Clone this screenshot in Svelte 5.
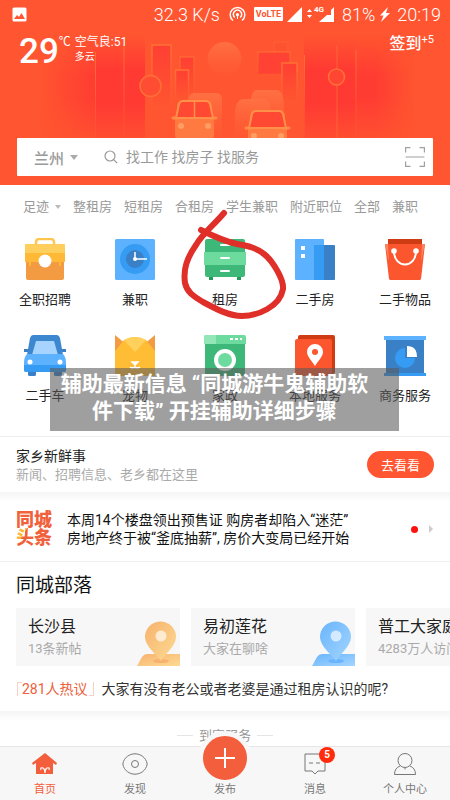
<script>
	const tags = ['整租房', '短租房', '合租房', '学生兼职', '附近职位', '全部', '兼职'];

	const services = [
		{ icon: 'case', name: '全职招聘' },
		{ icon: 'clock', name: '兼职' },
		{ icon: 'drawer', name: '租房' },
		{ icon: 'building', name: '二手房' },
		{ icon: 'bag', name: '二手物品' },
		{ icon: 'car', name: '二手车' },
		{ icon: 'cat', name: '宠物' },
		{ icon: 'washer', name: '家政' },
		{ icon: 'local', name: '本地服务' },
		{ icon: 'chart', name: '商务服务' }
	];

	const tribes = [
		{ name: '长沙县', info: '13条新帖', from: '#f7b26d', to: '#fddb93' },
		{ name: '易初莲花', info: '大家在聊啥', from: '#68b5fd', to: '#a5d5ff' },
		{ name: '普工大家庭', info: '4283万人访问', from: '#f7b26d', to: '#fddb93' }
	];

	let keyword = $state('');
	let current = $state('home');
</script>

<div class="page">
	<header>
		<svg class="skyline" viewBox="0 0 450 185" preserveAspectRatio="xMidYMin slice" aria-hidden="true">
			<defs>
				<linearGradient id="tower" x1="0" y1="0" x2="0" y2="1">
					<stop offset="0" stop-color="#ff3a33" stop-opacity="0" />
					<stop offset=".3" stop-color="#ff3a33" />
					<stop offset=".6" stop-color="#ff3a33" />
					<stop offset="1" stop-color="#ff3a33" stop-opacity="0" />
				</linearGradient>
				<linearGradient id="side" x1="0" y1="0" x2="1" y2="0">
					<stop offset="0" stop-color="#ff3a33" stop-opacity="0" />
					<stop offset="1" stop-color="#ff3a33" stop-opacity=".9" />
				</linearGradient>
				<linearGradient id="sideEnd" x1="1" y1="0" x2="0" y2="0">
					<stop offset="0" stop-color="#ff3a33" stop-opacity="0" />
					<stop offset="1" stop-color="#ff3a33" stop-opacity=".9" />
				</linearGradient>
				<linearGradient id="block" x1="0" y1="0" x2="0" y2="1">
					<stop offset="0" stop-color="#ff3f33" />
					<stop offset="1" stop-color="#ff5630" />
				</linearGradient>
				<linearGradient id="line" x1="0" y1="0" x2="0" y2="1">
					<stop offset="0" stop-color="#ff7135" />
					<stop offset="1" stop-color="#ff7135" stop-opacity=".1" />
				</linearGradient>
				<linearGradient id="van" x1="0" y1="0" x2="0" y2="1">
					<stop offset="0" stop-color="#ff7043" />
					<stop offset="1" stop-color="#ff5a32" stop-opacity=".4" />
				</linearGradient>
				<linearGradient id="fade" x1="0" y1="0" x2="0" y2="1">
					<stop offset="0" stop-color="#000" />
					<stop offset=".35" stop-color="#fff" />
					<stop offset=".55" stop-color="#fff" />
					<stop offset="1" stop-color="#000" />
				</linearGradient>
				<mask id="soft"><rect y="35" width="450" height="115" fill="url(#fade)" /></mask>
			</defs>
			<g mask="url(#soft)">
				<rect x="40" y="35" width="55" height="115" fill="url(#side)" />
				<rect x="375" y="35" width="40" height="115" fill="url(#sideEnd)" />
				<rect x="356" y="35" width="19" height="115" fill="#ff3a33" opacity=".9" />
			</g>
			<rect x="95" y="35" width="29" height="115" fill="url(#tower)" />
			<rect x="124" y="35" width="21" height="115" fill="url(#tower)" />
			<rect x="304" y="35" width="52" height="115" fill="url(#tower)" />
			<path d="M95 52h1v90h-1zM123.500 45h1v100h-1zM304 55h1v80h-1zM355.500 50h1v90h-1z" fill="url(#line)" />
			<path d="M336.500 45h1v24h-1zM336.500 85h1v60h-1z" fill="#ff6d34" opacity=".8" />
			<rect x="152" y="45" width="19" height="63" fill="url(#block)" stroke="url(#line)" stroke-width="1.500" />
			<rect x="180" y="57" width="14" height="42" fill="url(#block)" stroke="url(#line)" />
			<rect x="175.500" y="70" width="13" height="30" fill="url(#block)" stroke="url(#line)" stroke-width="1.500" />
			<circle cx="150.500" cy="86" r="10.500" fill="#ff4d33" stroke="#ff7038" stroke-width="1.500" />
			<rect x="274" y="42" width="14" height="15" fill="#ff5231" stroke="#ff6232" />
			<rect x="258" y="52" width="32" height="22" fill="#ff4233" stroke="url(#line)" />
			<rect x="282" y="63" width="15" height="39" fill="url(#block)" stroke="url(#line)" stroke-width="1.500" />
			<circle cx="336.500" cy="77" r="8" fill="#ff4633" stroke="#ff7038" stroke-width="1.500" />
			<circle cx="224.500" cy="59" r="17" fill="url(#van)" />
			<path d="M187 104q1-11 7-11h22q6 0 6 7v38h-35z" fill="url(#van)" />
			<path d="M250 105q1-15 7-15h20q6 0 7 15v30h-34z" fill="url(#van)" />
			<path d="M235 112q1-13 9-13h20q6 0 6 8v31h-35z" fill="url(#van)" />
			{#each [{ x: 172, y: 100 }, { x: 245, y: 110 }] as bus}
				<g transform="translate({bus.x} {bus.y})">
					<rect x="5" y="2" width="35" height="34" rx="4" fill="#ff7a40" />
					<rect x="3" y="16" width="39" height="22" rx="2" fill="#ff7a40" />
					<path d="M1 18h6M38 18h6" stroke="#ff8a46" stroke-width="3" stroke-linecap="round" />
					<path d="M4 18l3-14q1-3 4-3h23q3 0 4 3l3 14z" fill="#ff4933" stroke="#ff9049" stroke-width="2" />
					<circle cx="9" cy="26" r="3" fill="#ff9d62" />
					<circle cx="36" cy="26" r="3" fill="#ff9d62" />
				</g>
			{/each}
			<path d="M194.500 102v16" stroke="#ff9049" stroke-width="1.500" />
		</svg>

		<div class="status">
			<svg class="shot" width="15" height="15" viewBox="0 0 15 15">
				<rect x=".5" y=".5" width="14" height="14" rx="1.500" fill="#fff" />
				<path d="M2 12l3-4 2 2 2.500-4 3.500 6z" fill="#ff5530" />
			</svg>
			<span class="speed">32.3 K/s</span>
			<svg width="17" height="17" viewBox="0 0 17 17" fill="none" stroke="#fff" stroke-width="1.500">
				<path d="M4 14.500a7.300 7.300 0 1 1 9 0M5.800 11.500a4.200 4.200 0 1 1 5.400 0" />
				<circle cx="8.500" cy="8.700" r="1.600" fill="#fff" stroke="none" />
				<path d="M8.500 9v4" stroke-width="1" />
			</svg>
			<span class="volte">VoLTE</span>
			<svg width="15" height="15" viewBox="0 0 15 15"><path d="M15 0v15H0z" fill="#fff" /></svg>
			<span class="net">
				<svg width="5" height="10" viewBox="0 0 5 10" fill="#fff"><path d="M0 3l2.500-3L5 3zM0 6h5l-2.500 3z" /></svg>
				<svg width="20" height="17" viewBox="0 0 20 17"><path d="M20 1v15H5L13 9h4V4z" fill="#fff" /></svg>
				<small>4G</small>
			</span>
			<span class="battery">81%</span>
			<svg width="10" height="15" viewBox="0 0 10 15"><path d="M8 0L0 8.500h3.500L1 15l9-9H6z" fill="#fff" /></svg>
			<time>20:19</time>
		</div>

		<div class="weather">
			<strong>29</strong>
			<span class="unit">℃</span>
			<div class="air">
				<span>空气良:51</span>
				<small>多云</small>
			</div>
			<button class="sign">签到<sup>+5</sup></button>
		</div>

		<form class="search">
			<button type="button" class="city">
				兰州
				<svg width="8" height="5" viewBox="0 0 8 5"><path d="M0 0h8L4 5z" fill="#aaa" /></svg>
			</button>
			<svg width="14" height="14" viewBox="0 0 14 14" fill="none" stroke="#999" stroke-width="1.200">
				<circle cx="6" cy="6" r="5" />
				<path d="M9.700 9.700l3.500 3.500" />
			</svg>
			<input type="text" aria-label="搜索" placeholder="找工作 找房子 找服务" bind:value={keyword} />
			<button type="button" class="scan" aria-label="扫一扫">
				<svg width="20" height="20" viewBox="0 0 20 20" fill="none" stroke="#a0a0a0" stroke-width="1.200">
					<path d="M.6 5.500V.6h4.900M14.500.6h4.900v4.900M19.400 14.500v4.900h-4.900M5.500 19.400H.6v-4.900M.6 10h18.800" />
				</svg>
			</button>
		</form>
	</header>

	<nav class="tags">
		<button>
			足迹
			<svg width="6" height="4" viewBox="0 0 6 4"><path d="M0 0h6L3 4z" fill="#bbb" /></svg>
		</button>
		{#each tags as tag}
			<a href="#tag">{tag}</a>
		{/each}
	</nav>

	<section class="services">
		{#each services as item}
			<a href="#service">
				<svg width="42" height="42" viewBox="0 0 42 42">
					{#if item.icon === 'case'}
						<path d="M12 7V4q0-3 3-3h12q3 0 3 3v3" fill="none" stroke="#ffc64f" stroke-width="2.500" />
						<path d="M2 23h38v17q0 2-2 2H4q-2 0-2-2z" fill="#f39b43" />
						<path d="M2 6h38l1 2v16h-4v4h-2v-4H7v4H5v-4H1V8z" fill="#ffb936" />
						<path d="M2 6h38q1 0 1 1v8H1V7q0-1 1-1z" fill="#ffcf5d" />
						<circle cx="21" cy="23" r="6.500" fill="#fff" />
					{:else if item.icon === 'clock'}
						<rect x="1" y="1" width="40" height="41" rx="1.500" fill="#5cb2ff" />
						<circle cx="21" cy="21" r="15" fill="#369cf3" />
						<circle cx="21" cy="21" r="9" fill="#3a80c6" />
						<path d="M21 14v7h12" stroke="#fff" stroke-width="1.500" fill="none" />
						<circle cx="21" cy="21" r="2" fill="#fff" />
					{:else if item.icon === 'drawer'}
						<path d="M5 37h4v5H5zM33 37h4v5h-4z" fill="#239b5c" />
						<rect x="1" y="1" width="40" height="38" rx="2" fill="#3eb878" />
						<path d="M0 14h42v13H0z" fill="#6ddb9d" />
						<path d="M17 7h8M17 20h8M17 33h8" stroke="#fff" stroke-width="2" stroke-linecap="round" />
					{:else if item.icon === 'building'}
						<rect x="1" y="1" width="29" height="41" rx="1" fill="#5cb2ff" />
						<rect x="20" y="7" width="21" height="35" rx="1" fill="#3a80c6" />
						<path d="M20 7h10v35H21q-1 0-1-1z" fill="#369cf3" />
						<path d="M7 8h4v4H7zM7 16h4v4H7z" fill="#fff" />
					{:else if item.icon === 'bag'}
						<path d="M4 1h34v7H4z" fill="#cf3b13" />
						<path d="M1 6h40l-4 35-1 1H6l-1-1z" fill="#fb562e" />
						<path d="M1 6h3l1 18zM41 6h-3l-1 18z" fill="#ff8362" />
						<path d="M10 13c0 18 22 18 22 0" fill="none" stroke="#fff" stroke-width="2" />
						<circle cx="10" cy="13" r="2.800" fill="#fff" />
						<circle cx="32" cy="13" r="2.800" fill="#fff" />
					{:else if item.icon === 'car'}
						<path d="M4 36h8v5q0 1-2 1H6q-2 0-2-1zM30 36h8v5q0 1-2 1h-4q-2 0-2-1z" fill="#3a80c6" />
						<path d="M0 15h5v3H0zM37 15h5v3h-5z" fill="#3a80c6" />
						<path d="M9 1h24q2 0 3 3l3 17H3L6 4q1-3 3-3z" fill="#3c87cf" />
						<path d="M12 7h18l4 14H8z" fill="#a6d4ff" />
						<path d="M3 20h36q3 3 3 9v7q0 2-2 2H2q-2 0-2-2v-7q0-6 3-9z" fill="#5cb2ff" />
						<path d="M0 31h42v5q0 2-2 2H2q-2 0-2-2z" fill="#369cf3" />
						<circle cx="6" cy="28" r="2.500" fill="#fff" />
						<circle cx="36" cy="28" r="2.500" fill="#fff" />
					{:else if item.icon === 'cat'}
						<path d="M1 1l12 10L1 22zM41 1L29 11l12 11z" fill="#f39b43" />
						<path d="M1 17Q6 11 10 6Q21 0 32 6Q36 11 41 17V42H1z" fill="#ffbd36" />
						<path d="M10 6Q21 0 32 6L21 18z" fill="#ffd05c" />
						<path d="M18 28h6l-3 3zM21 30v4M16 33q3 3 5 0 2 3 5 0" fill="#fff" stroke="#fff" stroke-width="1.500" />
					{:else if item.icon === 'washer'}
						<path d="M1 9h40v33H1z" fill="#3eb878" />
						<path d="M2 1h38q2 0 2 2v7H0V3q0-2 2-2z" fill="#6ddb9d" />
						<path d="M2 1h10v9H0V3q0-2 2-2z" fill="#93e6b8" />
						<path d="M26 4h3v2h-3zM31 4h3v2h-3zM36 4h2v2h-2z" fill="#fff" />
						<circle cx="21" cy="26" r="9" fill="#6ddb9d" stroke="#fff" stroke-width="4" />
					{:else if item.icon === 'local'}
						<rect x="4" y="1" width="37" height="39" rx="2" fill="#cf3b13" />
						<rect x="1" y="5" width="37" height="37" rx="2" fill="#fb562e" />
						<path d="M21 32C17 26 13 22 13 18a8 8 0 0 1 16 0c0 4-4 8-8 14z" fill="#fff" />
						<circle cx="21" cy="18" r="3" fill="#fb562e" />
					{:else}
						<path d="M2 5h38v37H2z" fill="#3a80c6" />
						<path d="M0 2h42v4H0z" fill="#5cb2ff" />
						<path d="M0 39h42v3H0z" fill="#369cf3" />
						<path d="M21 14v10h10a10 10 0 1 1-10-10z" fill="#369cf3" />
						<path d="M23 12q10 0 10 11H23z" fill="#fff" />
					{/if}
				</svg>
				<span>{item.name}</span>
			</a>
		{/each}
		<svg class="mark" width="110" height="110" viewBox="0 0 110 110" aria-hidden="true">
			<path
				d="M43 4C32 17 22 24 15 36C6 49 2 60 4 74C6 83 12 87 22 93C35 100 48 107 61 107C76 107 99 98 102 80C103 70 91 51 83 45C74 38 66 37 56 35C42 32 32 27 20 21"
				fill="none"
				stroke="#df2f28"
				stroke-width="6"
				stroke-linecap="round"
				stroke-linejoin="round"
			/>
		</svg>
		<p class="caption">辅助最新信息 “同城游牛鬼辅助软<br />件下载” 开挂辅助详细步骤</p>
	</section>

	<section class="hometown">
		<div>
			<h2>家乡新鲜事</h2>
			<p>新闻、招聘信息、老乡都在这里</p>
		</div>
		<button>去看看</button>
	</section>

	<a class="headlines" href="#news">
		<span class="logo">同城<br /><i>头</i>条</span>
		<span class="news">本周14个楼盘领出预售证 购房者却陷入“迷茫”<br />房地产终于被“釜底抽薪”, 房价大变局已经开始</span>
		<span class="dot"></span>
		<svg width="4" height="8" viewBox="0 0 4 8"><path d="M0 0l4 4-4 4z" fill="#ccc" /></svg>
	</a>

	<section class="tribe">
		<h2>同城部落</h2>
		<div class="cards">
			{#each tribes as tribe, i}
				<a href="#tribe">
					<strong>{tribe.name}</strong>
					<span>{tribe.info}</span>
					<svg width="43" height="46" viewBox="0 0 43 46">
						<defs>
							<linearGradient id="pin{i}" x1="0" y1="0" x2="1" y2="1">
								<stop offset="0" stop-color={tribe.from} />
								<stop offset="1" stop-color={tribe.to} />
							</linearGradient>
						</defs>
						<path d="M0 46l5-9q2-3 5-3h33v12z" fill="url(#pin{i})" />
						<ellipse cx="24" cy="41" rx="8" ry="2" fill={tribe.from} />
						<path d="M24 41C19 34 8 26 8 17a15.500 15.500 0 0 1 31 0c0 9-11 17-15 24z" fill="url(#pin{i})" />
						<circle cx="24" cy="16" r="5.500" fill="#fff" opacity=".65" />
					</svg>
				</a>
			{/each}
		</div>
		<a class="hot" href="#hot"><b>281人热议</b>大家有没有老公或者老婆是通过租房认识的呢?</a>
	</section>

	<section class="home-service">
		<h3>到家服务</h3>
	</section>

	<nav class="tabbar">
		<button class:active={current === 'home'} onclick={() => (current = 'home')}>
			<svg width="26" height="22" viewBox="0 0 26 22">
				<path d="M13 0l12 10-1 2-3-2v11H4V10l-3 2-1-2z" fill="currentColor" />
				<path d="M9 17q-1-3 2-2 2 1 2 5 0-4 2-5 3-1 2 2" fill="none" stroke="#fff" stroke-width="1.200" />
			</svg>
			<span>首页</span>
		</button>
		<button class:active={current === 'find'} onclick={() => (current = 'find')}>
			<svg width="26" height="22" viewBox="0 0 26 22" fill="none" stroke="currentColor">
				<path d="M.8 11C2 4 8 .8 13 .8S24 4 25.200 11C24 18 18 21.200 13 21.200S2 18 .8 11z" />
				<circle cx="13" cy="11" r="3.500" />
			</svg>
			<span>发现</span>
		</button>
		<button class="publish">
			<i>
				<svg width="22" height="22" viewBox="0 0 22 22"><path d="M11 1v20M1 11h20" stroke="#fff" stroke-width="2" /></svg>
			</i>
			<span>发布</span>
		</button>
		<button class:active={current === 'message'} onclick={() => (current = 'message')}>
			<svg width="22" height="22" viewBox="0 0 22 22" fill="none" stroke="currentColor">
				<path d="M1 1h20v17h-7l-3 3-3-3H1zM5 10h4M12 10h4" />
			</svg>
			<em>5</em>
			<span>消息</span>
		</button>
		<button class:active={current === 'mine'} onclick={() => (current = 'mine')}>
			<svg width="22" height="22" viewBox="0 0 22 22" fill="none" stroke="currentColor">
				<circle cx="11" cy="7.500" r="7" />
				<path d="M6 13Q.5 15 .5 21.500h21Q21.500 15 16 13M11 14.500v2" />
			</svg>
			<span>个人中心</span>
		</button>
	</nav>
</div>

<style>
	:global(body) {
		margin: 0;
		background: #fff;
	}

	.page {
		font-family: Roboto, "Noto Sans CJK SC", sans-serif;
		color: #222;
		min-height: 100vh;
		display: flex;
		flex-direction: column;
		overflow: hidden;
	}

	button {
		font: inherit;
		color: inherit;
		background: none;
		border: 0;
		padding: 0;
		cursor: pointer;
	}

	a {
		color: inherit;
		text-decoration: none;
	}

	h2, h3, p {
		margin: 0;
		font-weight: 400;
	}

	svg {
		display: block;
		flex: none;
	}

	header {
		position: relative;
		background: #ff5530;
		color: #fff;
		padding-bottom: 9px;
	}

	.skyline {
		position: absolute;
		left: 0;
		top: 0;
		width: 100%;
		height: 100%;
	}

	.status, .weather, .search {
		position: relative;
		display: flex;
	}

	.status {
		align-items: center;
		height: 28px;
		padding: 0 9px 0 12px;
		font-size: 18px;
		font-weight: 300;
	}

	.shot {
		margin-right: auto;
	}

	.speed {
		margin-right: 9px;
	}

	.volte {
		margin: 0 4px 0 8px;
		width: 29px;
		height: 14px;
		border-radius: 1px;
		background: #fff;
		color: #ff5530;
		font-size: 9px;
		font-weight: 700;
		line-height: 14px;
		text-align: center;
	}

	.net {
		position: relative;
		display: flex;
		align-items: center;
		gap: 2px;
		margin: 0 8px 0 5px;
	}

	.net small {
		position: absolute;
		left: 7px;
		top: 0;
		font-size: 8px;
		font-weight: 700;
		line-height: 8px;
	}

	.battery {
		margin-right: 5px;
	}

	.status time {
		margin-left: 7px;
	}

	.weather {
		height: 110px;
		box-sizing: border-box;
		padding: 6px 16px 0 19px;
		align-items: flex-start;
	}

	.weather strong {
		font-size: 35px;
		font-weight: 500;
		line-height: 36px;
	}

	.unit {
		font-size: 12px;
		line-height: 16px;
	}

	.air {
		display: flex;
		flex-direction: column;
		margin: 0 auto 0 4px;
		font-size: 12px;
		line-height: 16px;
	}

	.air small {
		font-size: 10px;
		line-height: 14px;
	}

	.sign {
		display: flex;
		font-size: 16px;
		font-weight: 500;
		line-height: 20px;
	}

	.sign sup {
		font-size: 11px;
		font-weight: 400;
		line-height: 12px;
	}

	.search {
		align-items: center;
		height: 38px;
		margin: 0 17px;
		padding: 0 8px 0 17px;
		background: #fff;
		border-radius: 1px;
	}

	.city {
		display: flex;
		align-items: center;
		gap: 6px;
		margin-right: 26px;
		color: #999;
		font-size: 15px;
		font-weight: 500;
	}

	.search input {
		flex: 1;
		min-width: 0;
		border: 0;
		outline: 0;
		padding: 0 8px;
		font: inherit;
		font-size: 14px;
		color: #333;
	}

	.search input::placeholder {
		color: #999;
		opacity: 1;
	}

	.tags {
		display: flex;
		gap: 12px;
		padding: 12px 0 12px 23px;
		font-size: 13px;
		line-height: 20px;
		color: #999;
		white-space: nowrap;
	}

	.tags button {
		display: flex;
		align-items: center;
		gap: 6px;
	}

	.services {
		position: relative;
		display: grid;
		grid-template-columns: repeat(5, 1fr);
		row-gap: 24px;
		padding: 9px 0 30px;
		border-bottom: 1px solid #eee;
	}

	.services a {
		display: flex;
		flex-direction: column;
		align-items: center;
		gap: 10px;
		font-size: 13px;
		line-height: 20px;
		white-space: nowrap;
	}

	/* hand-drawn ring over the rental entry */
	.mark {
		position: absolute;
		left: 50%;
		top: -20px;
		margin-left: -44px;
		pointer-events: none;
	}

	.caption {
		position: absolute;
		left: 50px;
		right: 51px;
		bottom: 5px;
		box-sizing: border-box;
		padding: 3px 20px 6px 0;
		background: rgba(90, 90, 90, .58);
		color: #fff;
		font-size: 21px;
		font-weight: 700;
		line-height: 27px;
		text-align: center;
		white-space: nowrap;
	}

	.hometown {
		display: flex;
		align-items: center;
		justify-content: space-between;
		height: 55px;
		padding: 0 16px;
	}

	.hometown h2 {
		font-size: 14px;
		line-height: 20px;
	}

	.hometown p {
		font-size: 13px;
		line-height: 18px;
		color: #aaa;
	}

	.hometown button {
		width: 67px;
		height: 27px;
		border-radius: 14px;
		background: #ff5530;
		color: #fff;
		font-size: 13px;
	}

	.headlines {
		display: flex;
		align-items: center;
		padding: 19px 17px 14px 16px;
		background: linear-gradient(#f5f5f5, #fff 10px);
		border-bottom: 1px solid #eee;
	}

	.logo {
		margin-right: 15px;
		color: #f0613c;
		font-size: 18px;
		font-weight: 900;
		line-height: 18px;
	}

	.logo i {
		font-style: normal;
		background: linear-gradient(120deg, #fbb936 38%, #f0613c 39%);
		background-clip: text;
		color: transparent;
	}

	.news {
		flex: 1;
		font-size: 14px;
		line-height: 18px;
		color: #111;
		white-space: nowrap;
	}

	.dot {
		width: 7px;
		height: 7px;
		margin-right: 11px;
		border-radius: 50%;
		background: #f11;
	}

	.tribe {
		padding: 10px 0 12px 16px;
	}

	.tribe h2 {
		font-size: 19px;
		line-height: 28px;
		color: #111;
	}

	.cards {
		display: flex;
		gap: 11px;
		margin: 8px 0 13px;
		overflow: hidden;
	}

	.cards a {
		position: relative;
		flex: none;
		width: 164px;
		height: 58px;
		box-sizing: border-box;
		padding: 7px 0 0 12px;
		background: #f7f7f7;
		display: flex;
		flex-direction: column;
	}

	.cards strong {
		font-size: 16px;
		font-weight: 400;
		line-height: 24px;
	}

	.cards span {
		font-size: 13px;
		line-height: 20px;
		color: #aaa;
	}

	.cards svg {
		position: absolute;
		right: 0;
		bottom: 0;
	}

	.hot {
		display: flex;
		align-items: center;
		gap: 7px;
		font-size: 14px;
		line-height: 20px;
		color: #333;
		white-space: nowrap;
	}

	.hot b {
		position: relative;
		padding: 0 7px 0 6px;
		font-weight: 400;
		color: #ee603b;
	}

	.hot b::before, .hot b::after {
		content: "";
		position: absolute;
		width: 4px;
		height: 13px;
		border: 0 solid #fbcfc4;
	}

	.hot b::before {
		left: 1px;
		top: 3px;
		border-width: 1px 0 0 1px;
	}

	.hot b::after {
		right: 1px;
		bottom: 3px;
		border-width: 0 1px 1px 0;
	}

	.home-service {
		flex: 1;
		min-height: 34px;
		box-sizing: border-box;
		padding-top: 15px;
		background: linear-gradient(#f5f5f5, #fff 10px);
	}

	.home-service h3 {
		display: flex;
		align-items: center;
		justify-content: center;
		gap: 6px;
		height: 19px;
		font-size: 13px;
		line-height: 19px;
		color: #999;
	}

	.home-service h3::before, .home-service h3::after {
		content: "";
		width: 16px;
		height: 1px;
		background: #e5e5e5;
	}

	.tabbar {
		position: sticky;
		bottom: 0;
		display: grid;
		grid-template-columns: repeat(5, 1fr);
		background: #f7f7f7;
		border-top: 1px solid #e6e6e6;
	}

	.tabbar button {
		position: relative;
		display: flex;
		flex-direction: column;
		align-items: center;
		justify-content: flex-end;
		gap: 7px;
		height: 53px;
		padding-bottom: 2px;
		box-sizing: border-box;
		font-size: 11px;
		line-height: 16px;
		color: #777;
	}

	.tabbar span {
		position: relative;
		z-index: 1;
	}

	.tabbar .active {
		color: #f35e3c;
	}

	.tabbar i {
		position: absolute;
		top: -16px;
		display: grid;
		place-items: center;
		width: 44px;
		height: 44px;
		border: 5px solid #f7f7f7;
		border-radius: 50%;
		background: #f35e3c;
	}

	.tabbar em {
		position: absolute;
		left: 50%;
		top: 0;
		margin-left: 4px;
		width: 16px;
		height: 16px;
		border-radius: 50%;
		background: #ff2b0a;
		color: #fff;
		font-size: 10px;
		font-style: normal;
		font-weight: 700;
		line-height: 16px;
	}
</style>
